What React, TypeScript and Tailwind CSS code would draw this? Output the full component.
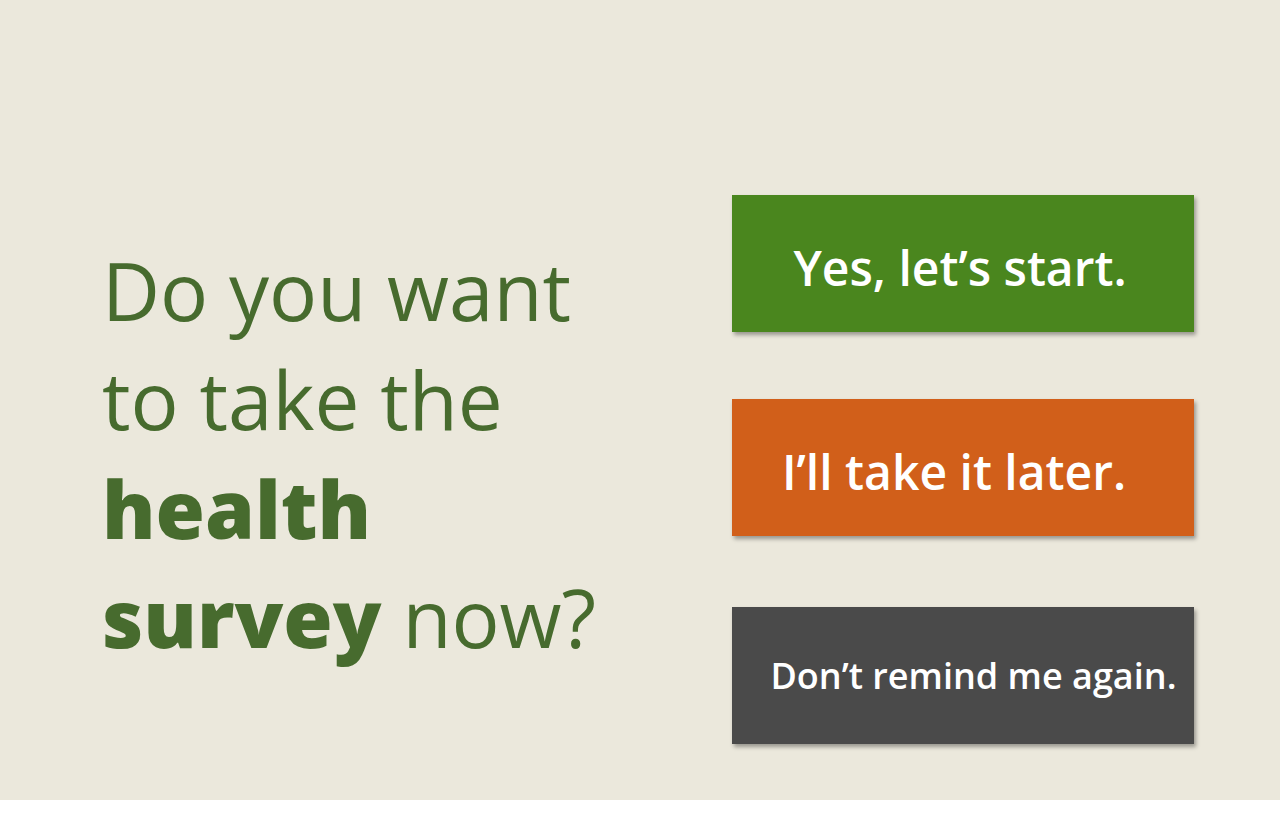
import React from 'react';

const BUTTONS = [
  { label: 'Yes, let’s start.', cls: 'bg-[#4a861e] text-[48px] mt-0 pr-[6px] pt-[9px]' },
  { label: 'I’ll take it later.', cls: 'bg-[#d15f1a] text-[48px] mt-[67px] pr-[18px] pt-[9px]' },
  { label: 'Don’t remind me again.', cls: 'bg-[#4a4a4a] text-[36px] mt-[71px] pl-[21px] pt-[1px]' },
];

export default function App() {
  return (
    <div className="w-full">
      <div
        className="h-[800px] bg-[#ebe8dc] flex items-start"
        style={{ fontFamily: '"Open Sans", "Noto Sans", sans-serif' }}
      >
        {/* 질문 */}
        <h1 className="pt-[235px] pl-[102px] text-[80px] leading-[109px] font-normal text-[#476b2e]">
          Do you want
          <br />
          to take the
          <br />
          <span className="font-extrabold">health</span>
          <br />
          <span className="font-extrabold">survey</span> now?
        </h1>

        {/* 버튼 */}
        <div className="ml-auto mr-[86px] pt-[195px] flex flex-col">
          {BUTTONS.map((b) => (
            <button
              key={b.label}
              className={`w-[462px] h-[137px] flex items-center justify-center text-white font-semibold shadow-[2px_3px_4px_rgba(0,0,0,0.35)] ${b.cls}`}
            >
              {b.label}
            </button>
          ))}
        </div>
      </div>
    </div>
  );
}
